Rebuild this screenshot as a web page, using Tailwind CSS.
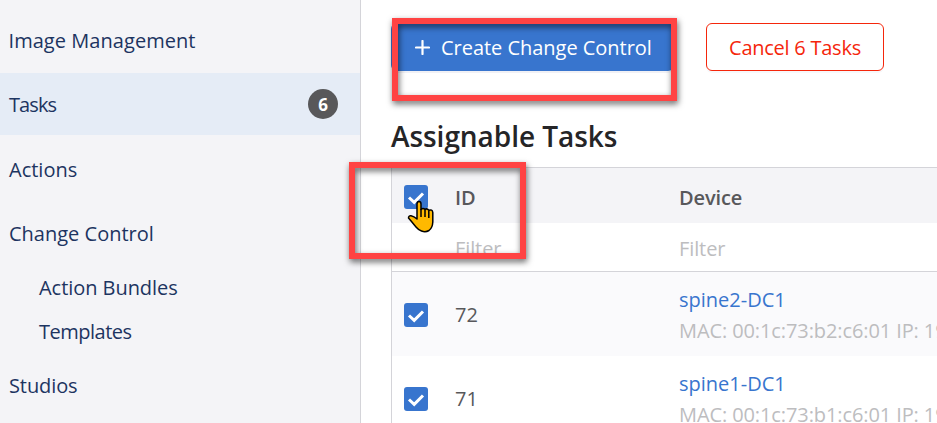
<!DOCTYPE html>
<html lang="en">
<head>
<meta charset="utf-8">
<title>Tasks</title>
<script src="https://cdn.jsdelivr.net/npm/@tailwindcss/browser@4"></script>
</head>
<body class="relative flex h-[423px] w-[937px] overflow-hidden bg-white font-['Open_Sans','Noto_Sans',sans-serif] text-[20px] leading-[30px] text-[#58585b]">
  <nav class="flex w-[361px] shrink-0 flex-col border-r border-[#d4d4d9] bg-[#f4f4f7] text-[#1d3461]">
    <a class="flex h-[73px] items-center pt-[9px] pl-[8.500px]"><span class="tracking-[0.05px]">Image Management</span></a>
    <a class="flex h-[62px] items-center justify-between bg-[#e5ecf6] pr-[22px] pl-[9px]"><span class="pt-[2px] tracking-[-0.9px]">Tasks</span><span class="flex size-[30px] items-center justify-center rounded-full bg-[#58585a] pt-px text-[17px] font-bold text-white">6</span></a>
    <a class="flex h-[67px] items-center pt-[2px] pl-[9px]"><span>Actions</span></a>
    <a class="flex h-[62px] items-center pt-[2px] pl-[9px]"><span>Change Control</span></a>
    <a class="flex h-[44px] items-center pt-[3px] pl-[39px]"><span class="tracking-[-0.05px]">Action Bundles</span></a>
    <a class="flex h-[44px] items-center pt-[3px] pl-[39px]"><span class="tracking-[-0.5px]">Templates</span></a>
    <a class="flex h-[64px] items-center pt-[3px] pl-[9px]"><span class="tracking-[-0.1px]">Studios</span></a>
  </nav>
  <main class="flex w-[576px] shrink-0 flex-col pl-[30px]">
    <div class="flex gap-[32px] pt-[23px]">
      <button class="flex h-[48px] w-[283px] items-center rounded-[6px] bg-[#3875ce] pl-[24px] text-white shadow-[0_2px_0_#f1f1f5]">
        <svg class="mr-[11px] size-[15px] shrink-0" viewBox="0 0 15 15" stroke="currentColor" stroke-width="2.2" stroke-linecap="round"><path d="M7.5 1V14M1 7.5H14"/></svg>
        <span class="pt-[2px] tracking-[-0.03px] whitespace-nowrap">Create Change Control</span>
      </button>
      <button class="flex h-[48px] w-[178px] items-center justify-center rounded-[6px] border border-[#f5260b] bg-white text-[#f5260b] shadow-[0_2px_0_#f8f8fa]"><span class="pt-[2px] tracking-[-0.25px] whitespace-nowrap">Cancel 6 Tasks</span></button>
    </div>
    <h2 class="mt-[45px] h-[51px] text-[28px] leading-[40px] font-semibold text-[#252527]"><span class="tracking-[-0.05px]">Assignable Tasks</span></h2>
    <section class="flex h-[256px] flex-col overflow-hidden border-t border-l border-[#d4d4d9]">
      <div class="flex h-[55px] shrink-0 items-center bg-[#f4f4f7] pl-[12px] font-semibold">
        <span class="mt-[3px] mr-[27px] flex size-[24px] shrink-0 rounded-[3px] bg-[#3875ce]"><svg class="size-[24px]" viewBox="0 0 24 24" fill="none" stroke="#fff" stroke-width="3"><path d="M5 12.5L10.2 17.3L19 8.5"/></svg></span>
        <span class="w-[224px] shrink-0 pt-[5px]">ID</span><span class="pt-[5px] tracking-[-0.1px]">Device</span>
      </div>
      <div class="flex h-[49px] shrink-0 items-center border-b border-[#d4d4d9] pt-[3px] pl-[63px] text-[#bdbdbf]"><span class="w-[224px] shrink-0 tracking-[-0.1px]">Filter</span><span class="tracking-[-0.1px]">Filter</span></div>
      <div class="flex h-[84px] shrink-0 items-center bg-[#fafafc] pl-[12px]">
        <span class="mt-[2px] mr-[27px] flex size-[24px] shrink-0 rounded-[3px] bg-[#3875ce]"><svg class="size-[24px]" viewBox="0 0 24 24" fill="none" stroke="#fff" stroke-width="3"><path d="M5 12.5L10.2 17.3L19 8.5"/></svg></span>
        <span class="w-[224px] shrink-0 pt-[2px]">72</span>
        <div class="pt-[3px] whitespace-nowrap"><div class="text-[#3875ce]">spine2-DC1</div><div class="pt-px tracking-[-0.1px] text-[#bdbdbf]">MAC: 00:1c:73:b2:c6:01 IP: 192.168.0.12</div></div>
      </div>
      <div class="flex h-[84px] shrink-0 items-center pl-[12px]">
        <span class="mt-[2px] mr-[27px] flex size-[24px] shrink-0 rounded-[3px] bg-[#3875ce]"><svg class="size-[24px]" viewBox="0 0 24 24" fill="none" stroke="#fff" stroke-width="3"><path d="M5 12.5L10.2 17.3L19 8.5"/></svg></span>
        <span class="w-[224px] shrink-0 pt-[2px]">71</span>
        <div class="pt-[3px] whitespace-nowrap"><div class="text-[#3875ce]">spine1-DC1</div><div class="pt-px tracking-[-0.1px] text-[#bdbdbf]">MAC: 00:1c:73:b1:c6:01 IP: 192.168.0.11</div></div>
      </div>
    </section>
  </main>
  <div class="absolute top-[18px] left-[392px] h-[83px] w-[285px] border-6 border-[#ff4343] drop-shadow-[1px_3px_3px_rgba(0,0,0,0.6)]"></div>
  <div class="absolute top-[162px] left-[349px] h-[97px] w-[177px] border-6 border-[#ff4343] drop-shadow-[1px_3px_3px_rgba(0,0,0,0.6)]"></div>
  <svg class="absolute top-[200px] left-[407px] h-[33px] w-[27px]" viewBox="0 0 27 33" fill="#ffb900" stroke="#000" stroke-width="1.5" stroke-linejoin="round"><path d="M10 19V4Q10 1.500 12 1.500T14 4V9.500Q16 7.500 18 9.500Q20 8 21.800 10.300Q25.300 9 25.800 12.500V22Q25.500 28 22 30.500Q18.500 32.500 14.500 31Q11.500 30 9 27L4.500 21.500L1.500 18Q1.500 15.500 4 15.800Q7 16.500 10 19Z"/><path d="M14 9V17M18 10V17M21.800 11V18" fill="none"/></svg>
</body>
</html>
